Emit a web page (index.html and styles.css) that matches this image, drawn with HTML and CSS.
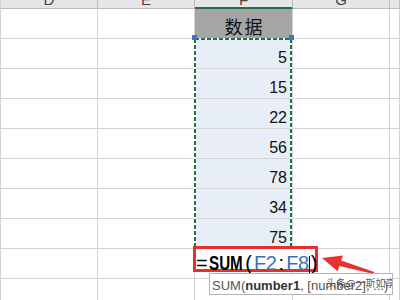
FILE: index.html
```html
<!DOCTYPE html>
<html lang="zh-CN">
<head>
    <meta charset="UTF-8">
    <title>SUM</title>
    <link rel="stylesheet" href="styles.css">
</head>
<body>
    <div class="stage">
        <div class="sheet">
            <div class="col-head">D</div>
            <div class="col-head">E</div>
            <div class="col-head active">F</div>
            <div class="col-head">G</div>
            <div class="col-head"></div>

            <div class="cell"></div><div class="cell"></div><div class="cell title">数据</div><div class="cell"></div><div class="cell"></div>
            <div class="cell"></div><div class="cell"></div><div class="cell num">5</div><div class="cell"></div><div class="cell"></div>
            <div class="cell"></div><div class="cell"></div><div class="cell num">15</div><div class="cell"></div><div class="cell"></div>
            <div class="cell"></div><div class="cell"></div><div class="cell num">22</div><div class="cell"></div><div class="cell"></div>
            <div class="cell"></div><div class="cell"></div><div class="cell num">56</div><div class="cell"></div><div class="cell"></div>
            <div class="cell"></div><div class="cell"></div><div class="cell num">78</div><div class="cell"></div><div class="cell"></div>
            <div class="cell"></div><div class="cell"></div><div class="cell num">34</div><div class="cell"></div><div class="cell"></div>
            <div class="cell"></div><div class="cell"></div><div class="cell num">75</div><div class="cell"></div><div class="cell"></div>
            <div class="cell"></div><div class="cell"></div><div class="cell"></div><div class="cell"></div><div class="cell"></div>
            <div class="cell"></div><div class="cell"></div><div class="cell"></div><div class="cell"></div><div class="cell"></div>
        </div>

        <!-- copy range ants, range handles and the pointer arrow -->
        <svg class="marks" width="400" height="300" viewBox="0 0 400 300">
            <rect x="195" y="39" width="96" height="209" fill="none" stroke="#fff" stroke-width="2"/>
            <rect x="195" y="39" width="96" height="209" fill="none" stroke="#217346" stroke-width="2" stroke-dasharray="4 2"/>
            <rect x="192" y="35" width="5" height="5" fill="#4472c4"/>
            <rect x="289" y="35" width="5" height="5" fill="#4472c4"/>
            <polygon points="322,258 343,255.5 341.2,260.6 374.3,272 373.7,274 339.5,266 337.6,271.2" fill="#e8322f"/>
        </svg>

        <div class="editor"><span class="eq">=</span><span class="fn">SUM</span><span class="paren">(</span><span class="ref">F2</span><span class="colon">:</span><span class="ref">F8</span><span class="caret"></span><span class="close">)</span></div>

        <div class="tip">SUM(<b>number1</b>, [number2], ...)<span class="mark">头条@一斯如享</span></div>
    </div>
</body>
</html>
```

FILE: styles.css
```css
body {
    margin: 0;
    background-color: #fff;
    font-family: "Liberation Sans", Arial, sans-serif;
}

.stage {
    position: relative;
    width: 400px;
    height: 300px;
    overflow: hidden;
}

.sheet {
    display: grid;
    grid-template-columns: 97px 97px 98px 97px 1fr;
    grid-template-rows: 9px;
    grid-auto-rows: 30px;
    border-left: 1px solid #d4d4d4;
}

.col-head {
    box-sizing: border-box;
    display: flex;
    justify-content: center;
    align-items: flex-end;
    overflow: hidden;
    padding-bottom: 1px;
    background-color: #e6e6e6;
    border-right: 1px solid #bdbdbd;
    border-bottom: 1px solid #bdbdbd;
    color: #444;
    font-size: 15px;
    line-height: 15px;
}

.col-head.active {
    border-bottom: 2px solid #217346;
    padding-bottom: 0;
}

.cell {
    box-sizing: border-box;
    border-right: 1px solid #d4d4d4;
    border-bottom: 1px solid #d4d4d4;
}

.title {
    display: flex;
    justify-content: center;
    align-items: center;
    padding: 4px 0 0 2px;
    background-color: #a5a5a5;
    font-family: "Noto Sans CJK SC", sans-serif;
    font-size: 18px;
    line-height: 18px;
    letter-spacing: 2px;
    color: #111;
}

.num {
    display: flex;
    justify-content: flex-end;
    align-items: flex-end;
    padding: 0 5px 1px 0;
    background-color: #e8eef8;
    font-size: 16px;
    line-height: 18px;
    color: #111;
}

.marks {
    position: absolute;
    top: 0;
    left: 0;
}

.editor {
    position: absolute;
    left: 193px;
    top: 246px;
    box-sizing: border-box;
    width: 125px;
    height: 26px;
    padding-top: 4px;
    border: 3px solid #e3302f;
    background-color: #fff;
    white-space: nowrap;
    font-size: 20px;
    line-height: 20px;
    color: #000;
}

.editor span {
    display: inline-block;
}

.eq {
    width: 13px;
}

.fn {
    width: 34px;
    font-weight: bold;
    transform: scaleX(0.76);
    transform-origin: left;
}

.paren {
    width: 11px;
    text-align: center;
}

.ref {
    color: #3a6fc6;
    letter-spacing: -0.5px;
}

.colon {
    width: 10px;
    text-align: center;
}

.caret {
    width: 1px;
    height: 17px;
    margin: 0 1px 0 0;
    vertical-align: -3px;
    background-color: #000;
}

.tip {
    position: absolute;
    left: 209px;
    top: 273px;
    box-sizing: border-box;
    width: 184px;
    height: 22px;
    padding: 3px 0 0 2px;
    border: 1px solid #b5b5b5;
    background-color: #fff;
    white-space: nowrap;
    overflow: hidden;
    font-size: 13px;
    line-height: 18px;
    color: #555;
}

.tip b {
    color: #333;
}

.mark {
    position: absolute;
    left: 116px;
    top: 2px;
    font-family: "Noto Sans CJK SC", sans-serif;
    font-size: 10px;
    line-height: 14px;
    color: rgba(60, 60, 60, 0.85);
}
```
